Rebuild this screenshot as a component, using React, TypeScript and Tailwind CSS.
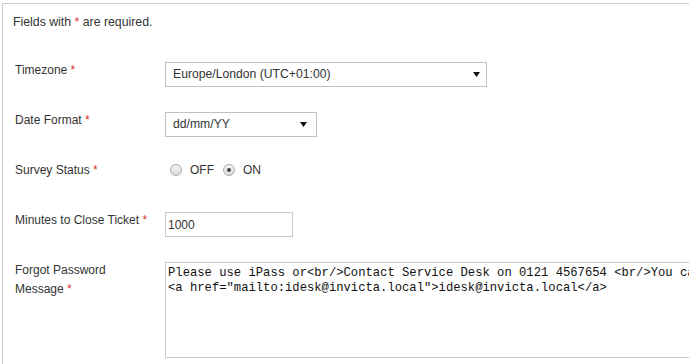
import React from 'react';

const Req = () => <span className="text-[#d2322d]">*</span>;

const Arrow = ({ className }: { className: string }) => (
  <svg width="7" height="5" viewBox="0 0 7 5" className={className}>
    <polygon points="0,0 7,0 3.5,5" fill="#111" />
  </svg>
);

const Label = ({ children }: { children: React.ReactNode }) => (
  <div className="w-[150px] shrink-0 -mt-px text-[12px] leading-[18px] text-[#333]">{children}</div>
);

const Radio = ({ checked, label }: { checked?: boolean; label: string }) => (
  <label className="flex items-center">
    <span className="w-[12px] h-[12px] rounded-full border border-[#a9a9a9] bg-gradient-to-b from-[#f4f4f4] to-[#dcdcdc] flex items-center justify-center">
      {checked && <span className="w-[4px] h-[4px] rounded-full bg-[#444]" />}
    </span>
    <span className="ml-[8px] text-[12px] text-[#333]">{label}</span>
  </label>
);

const SettingsForm = () => {
  return (
    <div className="w-[689px] h-[364px] overflow-hidden bg-white font-['Liberation_Sans',Arial,sans-serif]">
      <div className="ml-[2px] mt-[3px] w-[800px] border-t border-l border-[#cccccc] pl-[12px] pt-[9px] pb-8">
        <p className="-ml-[2px] text-[12.3px] leading-[18px] text-[#333] mb-[31px]">
          Fields with <Req /> are required.
        </p>

        <div className="flex h-[25px] mb-[25px]">
          <Label>
            Timezone <Req />
          </Label>
          <div className="relative w-[322px] h-[25px] border border-[#c0c0c0] bg-white flex items-center pl-[7px] text-[12.2px] text-[#333]">
            Europe/London (UTC+01:00)
            <Arrow className="absolute right-[6px] top-[9px]" />
          </div>
        </div>

        <div className="flex h-[25px] mb-[25px]">
          <Label>
            Date Format <Req />
          </Label>
          <div className="relative w-[152px] h-[25px] border border-[#c0c0c0] bg-white flex items-center pl-[7px] text-[12.2px] text-[#333]">
            dd/mm/YY
            <Arrow className="absolute right-[9px] top-[9px]" />
          </div>
        </div>

        <div className="flex h-[25px] mb-[25px]">
          <Label>
            Survey Status <Req />
          </Label>
          <div className="flex items-center gap-[9px] h-[18px] -mt-px ml-[5px]">
            <Radio label="OFF" />
            <Radio label="ON" checked />
          </div>
        </div>

        <div className="flex h-[25px] mb-[25px]">
          <Label>
            Minutes to Close Ticket <Req />
          </Label>
          <input
            readOnly
            value="1000"
            className="w-[128px] h-[25px] border border-[#c8c8c8] px-[2px] text-[12px] text-[#333] outline-none"
          />
        </div>

        <div className="flex">
          <Label>
            <span className="leading-[19px]">Forgot Password</span>
            <br />
            Message <Req />
          </Label>
          <textarea
            readOnly
            wrap="off"
            value={
              'Please use iPass or<br/>Contact Service Desk on 0121 4567654 <br/>You can also email\n<a href="mailto:idesk@invicta.local">idesk@invicta.local</a>'
            }
            className="w-[600px] h-[96px] border border-[#c8c8c8] pl-[2px] pt-[3px] font-['Liberation_Mono',monospace] text-[12.2px] leading-[15px] text-[#111] whitespace-pre overflow-hidden resize-none outline-none"
          />
        </div>
      </div>
    </div>
  );
};

export default function App() {
  return <SettingsForm />;
}
